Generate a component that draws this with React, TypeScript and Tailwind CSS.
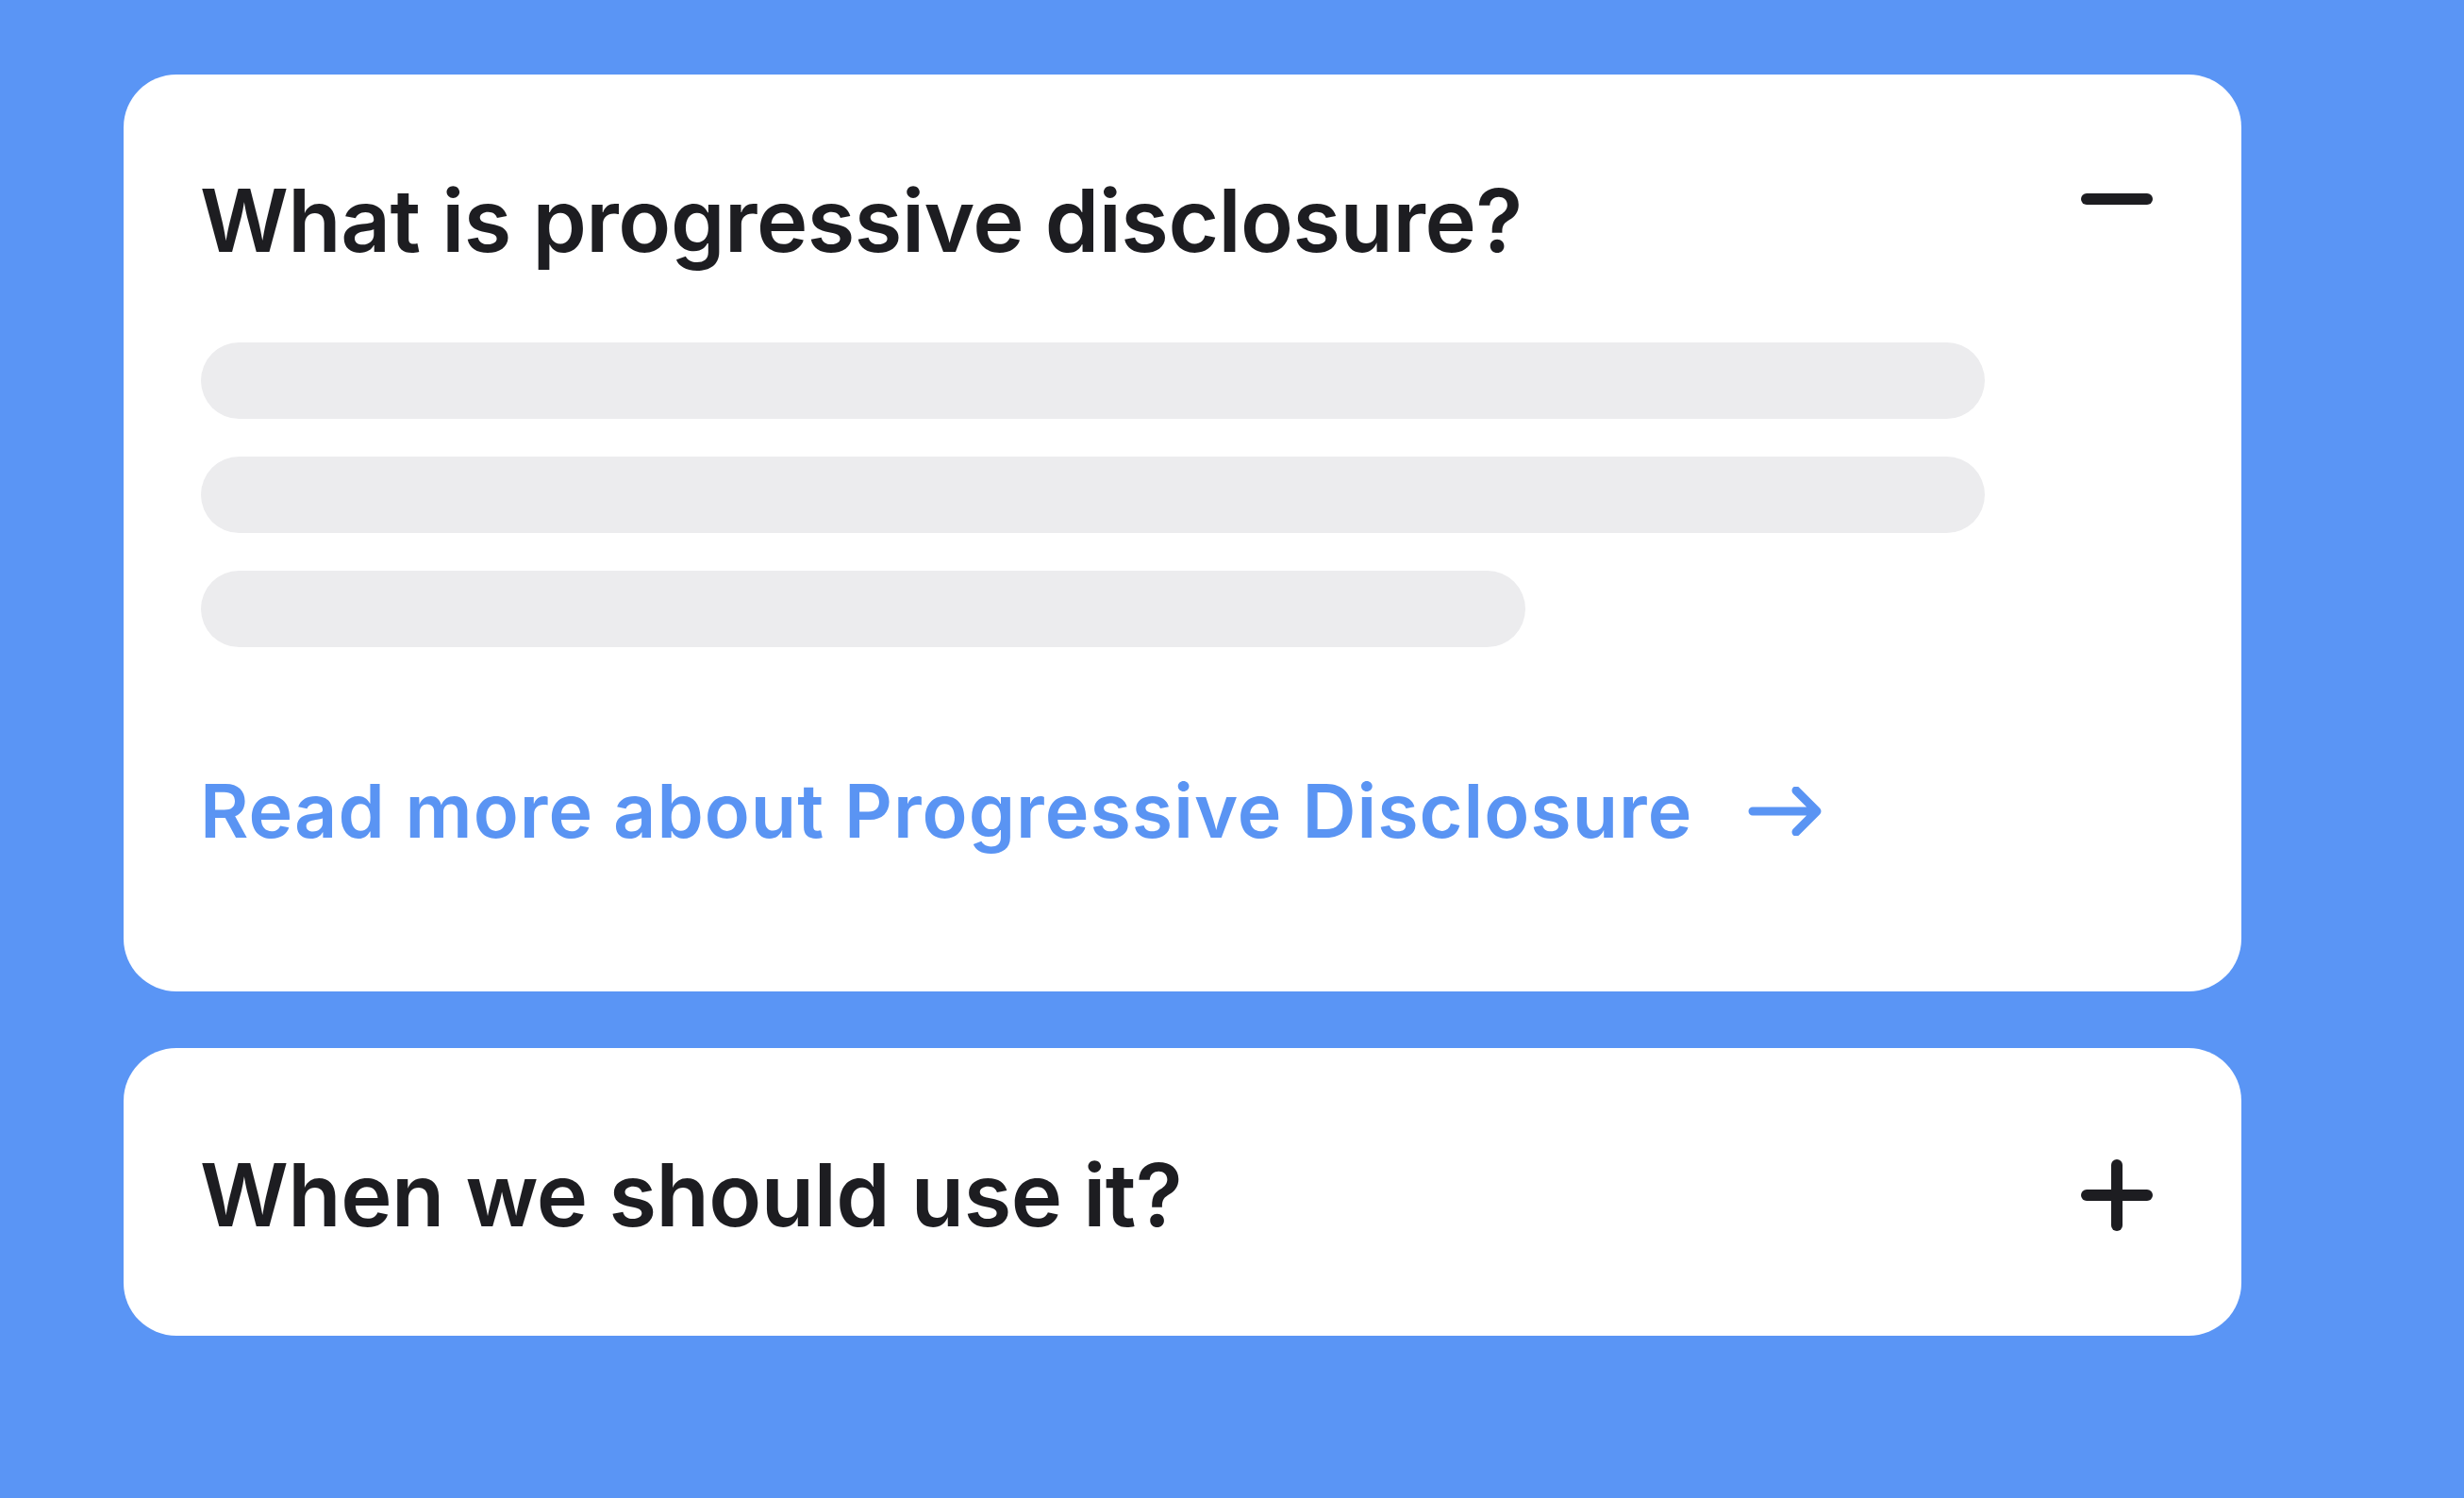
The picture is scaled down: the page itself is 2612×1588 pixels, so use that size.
import React from 'react';

const Minus = () => (
  <svg width="80" height="80" viewBox="0 0 80 80" fill="none" className="shrink-0">
    <line x1="8" y1="40" x2="72" y2="40" stroke="#1d1d21" strokeWidth="12" strokeLinecap="round" />
  </svg>
);

const Plus = () => (
  <svg width="80" height="80" viewBox="0 0 80 80" fill="none" className="shrink-0">
    <line x1="8" y1="40" x2="72" y2="40" stroke="#1d1d21" strokeWidth="12" strokeLinecap="round" />
    <line x1="40" y1="8" x2="40" y2="72" stroke="#1d1d21" strokeWidth="12" strokeLinecap="round" />
  </svg>
);

const Arrow = () => (
  <svg width="80" height="52" viewBox="0 0 80 52" fill="none" className="shrink-0">
    <path
      d="M6 26 H74 M52 4 L74 26 L52 48"
      stroke="#5a94f3"
      strokeWidth="9"
      strokeLinecap="round"
      strokeLinejoin="round"
    />
  </svg>
);

export default function App() {
  return (
    <div
      className="min-h-screen w-full bg-[#5a95f5] pl-[131px] pt-[79px]"
      style={{ fontFamily: 'Inter, "Noto Sans", sans-serif' }}
    >
      <div className="flex w-[2245px] flex-col gap-[60px]">
        <div className="rounded-[56px] bg-white pl-[81px] pr-[92px] pt-[92px] pb-[152px]">
          <div className="flex items-start justify-between">
            <h2 className="mt-[17px] text-[92px] font-semibold leading-[92px] tracking-[-0.5px] text-[#1d1d21]">
              What is progressive disclosure?
            </h2>
            <Minus />
          </div>
          <div className="mt-[83px] flex flex-col gap-[40px] ml-[1px]">
            <div className="h-[81px] w-[1891px] rounded-full bg-[#ececee]" />
            <div className="h-[81px] w-[1891px] rounded-full bg-[#ececee]" />
            <div className="h-[81px] w-[1404px] rounded-full bg-[#ececee]" />
          </div>
          <a href="#" className="mt-[134px] flex items-center gap-[58px] text-[#5a94f3]">
            <span className="text-[79px] font-semibold leading-[79px] tracking-[1px]">
              Read more about Progressive Disclosure
            </span>
            <Arrow />
          </a>
        </div>
        <div className="rounded-[56px] bg-white pl-[81px] pr-[92px] pt-[110px] pb-[103px]">
          <div className="flex items-center justify-between">
            <h2 className="text-[92px] font-semibold leading-[92px] tracking-[-0.5px] text-[#1d1d21]">
              When we should use it?
            </h2>
            <Plus />
          </div>
        </div>
      </div>
    </div>
  );
}
